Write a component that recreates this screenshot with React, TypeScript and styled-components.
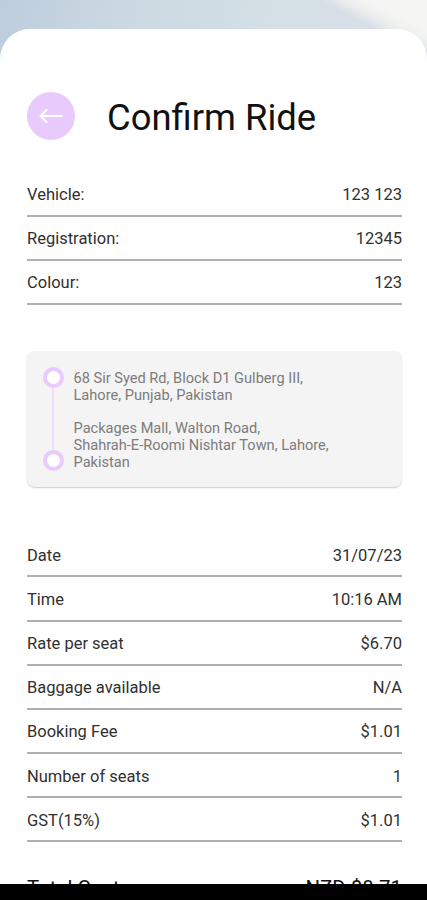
import React from "react";
import styled, { createGlobalStyle } from "styled-components";

const Global = createGlobalStyle`
  *, *::before, *::after { box-sizing: border-box; }
  body { margin: 0; background: #000; }
`;

const Screen = styled.div`
  height: 900px;
  display: flex;
  flex-direction: column;
  overflow: hidden;
  background: #000;
  font-family: Roboto, "Liberation Sans", sans-serif;
  color: #303030;
`;

const Backdrop = styled.main`
  height: 884px;
  flex: none;
  overflow: hidden;
  padding-top: 29px;
  background:
    linear-gradient(28deg, transparent 61%, rgba(244, 244, 242, 0.75) 70%, #f5f5f3 78%) 100% 0 / 160px 60px no-repeat,
    linear-gradient(100deg, #bdcddd 0, #ccd9e2 22%, #d5e0e6 50%, #d9dfe8 74%, #dce3e8 100%);
`;

const Sheet = styled.section`
  height: 855px;
  padding: 63px 25px 0 27px;
  border-radius: 30px 30px 0 0;
  background: #fff;
`;

const Header = styled.header`
  display: flex;
  align-items: center;
  gap: 32px;
  height: 48px;
`;

const BackButton = styled.button`
  width: 48px;
  height: 48px;
  padding: 0;
  border: 0;
  border-radius: 50%;
  display: grid;
  place-items: center;
  background: #e9cafd;
`;

const Title = styled.h1`
  margin: 4px 0 0;
  font-size: 36.4px;
  font-weight: 400;
  line-height: 44px;
  color: #111;
  white-space: nowrap;
`;

const Details = styled.dl<{ $top: number }>`
  margin: ${(p) => p.$top}px 0 0;
`;

const Row = styled.div`
  height: 44.2px;
  padding-top: 3px;
  display: flex;
  justify-content: space-between;
  align-items: center;
  border-bottom: 2px solid #b0b0b0;
  font-size: 16.5px;
  line-height: 20px;
`;

const Label = styled.dt`
  margin: 0;
`;

const Value = styled.dd`
  margin: 0;
`;

const RouteCard = styled.section`
  height: 136px;
  margin-top: 45.7px;
  padding: 16px 16px 0 15.5px;
  display: flex;
  gap: 10px;
  border-radius: 8px;
  background: #f4f4f4;
  box-shadow: 0 1px 1.5px rgba(0, 0, 0, 0.2);
`;

const Track = styled.div`
  width: 21px;
  height: 104px;
  display: flex;
  flex-direction: column;
  align-items: center;
`;

const Stop = styled.span`
  width: 21px;
  height: 21px;
  flex: none;
  border: 4px solid #e9cafd;
  border-radius: 50%;
  background: #fff;
`;

const Connector = styled.span`
  width: 2.5px;
  flex: 1;
  background: #eedffa;
`;

const Addresses = styled.div`
  display: flex;
  flex-direction: column;
  gap: 16px;
  padding-top: 3px;
`;

const Address = styled.p`
  margin: 0;
  font-size: 14.6px;
  line-height: 17px;
  color: #7c7c7c;
  white-space: nowrap;
`;

const TotalRow = styled.div`
  margin-top: 34px;
  display: flex;
  justify-content: space-between;
  font-size: 20.4px;
  line-height: 24px;
  color: #111;
`;

type Entry = [string, string];

const vehicle: Entry[] = [
  ["Vehicle:", "123 123"],
  ["Registration:", "12345"],
  ["Colour:", "123"],
];

const booking: Entry[] = [
  ["Date", "31/07/23"],
  ["Time", "10:16 AM"],
  ["Rate per seat", "$6.70"],
  ["Baggage available", "N/A"],
  ["Booking Fee", "$1.01"],
  ["Number of seats", "1"],
  ["GST(15%)", "$1.01"],
];

function DetailList({ entries, top }: { entries: Entry[]; top: number }) {
  return (
    <Details $top={top}>
      {entries.map(([label, value]) => (
        <Row key={label}>
          <Label>{label}</Label>
          <Value>{value}</Value>
        </Row>
      ))}
    </Details>
  );
}

export default function App() {
  return (
    <Screen>
      <Global />
      <Backdrop>
        <Sheet>
          <Header>
            <BackButton aria-label="Back">
              <svg width="26" height="16" viewBox="0 0 26 16" fill="none" stroke="#fff" strokeWidth="2">
                <path d="M9.2 1.2 2.6 8 9.2 14.8M2.6 8H24.5" />
              </svg>
            </BackButton>
            <Title>Confirm Ride</Title>
          </Header>
          <DetailList entries={vehicle} top={32.5} />
          <RouteCard>
            <Track>
              <Stop />
              <Connector />
              <Stop />
            </Track>
            <Addresses>
              <Address>
                68 Sir Syed Rd, Block D1 Gulberg III,
                <br />
                Lahore, Punjab, Pakistan
              </Address>
              <Address>
                Packages Mall, Walton Road,
                <br />
                Shahrah-E-Roomi Nishtar Town, Lahore,
                <br />
                Pakistan
              </Address>
            </Addresses>
          </RouteCard>
          <DetailList entries={booking} top={46.4} />
          <TotalRow>
            <span>Total Cost</span>
            <span>NZD $8.71</span>
          </TotalRow>
        </Sheet>
      </Backdrop>
    </Screen>
  );
}
